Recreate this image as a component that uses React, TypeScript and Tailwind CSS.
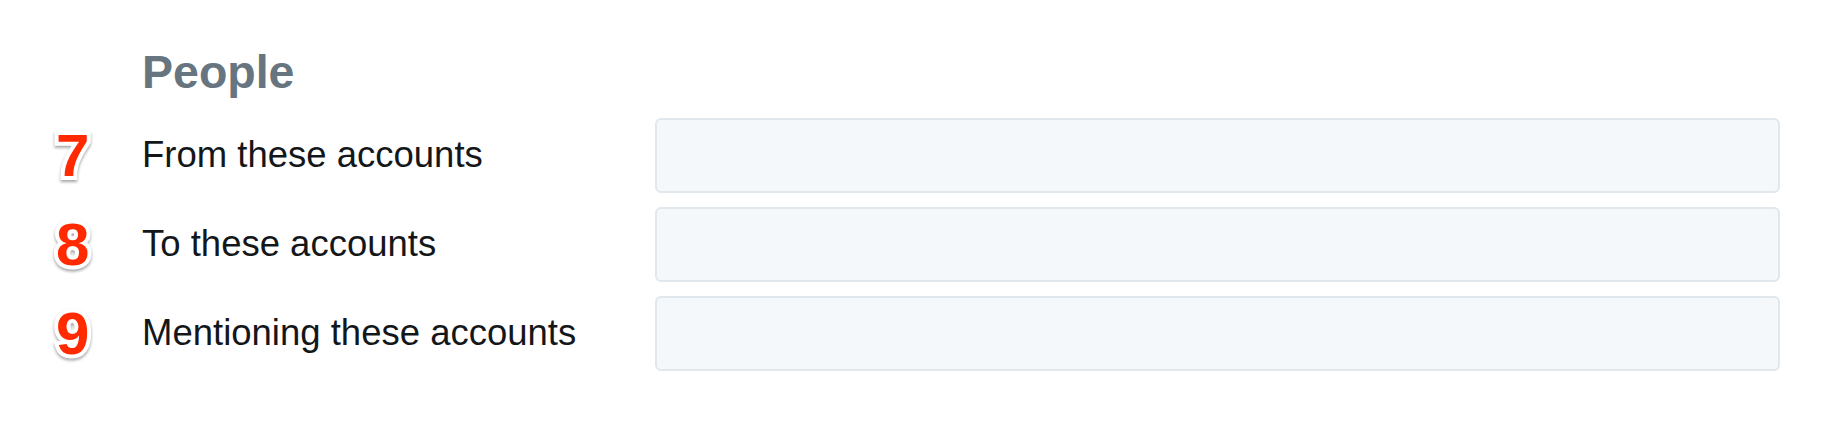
import React from "react";

const filas = [
    { numero: "7", texto: "From these accounts" },
    { numero: "8", texto: "To these accounts" },
    { numero: "9", texto: "Mentioning these accounts" },
];

function Numero({ valor }: { valor: string }) {
    return (
        <span
            className="text-[60px] leading-none font-bold text-[#ff2a00] [-webkit-text-stroke:8px_white] [paint-order:stroke_fill] drop-shadow-[0_2px_1.5px_rgba(0,0,0,0.35)]"
        >
            {valor}
        </span>
    );
}

export default function App() {
    return (
        <div className="w-full h-[422px] bg-white overflow-hidden font-['Liberation_Sans',Arial,sans-serif]">
            <div className="pl-[142px] pt-[49px]">
                <h2 className="text-[46.5px] leading-none font-bold text-[#66757f] h-[46px]">People</h2>
            </div>

            <div className="mt-[23px] flex flex-col gap-[14px]">
                {filas.map((fila) => (
                    <div className="flex flex-row items-center h-[75px]" key={fila.numero}>
                        <div className="w-[142px] shrink-0 pl-[56px]">
                            <Numero valor={fila.numero} />
                        </div>
                        <div className="w-[513px] shrink-0 text-[36.5px] text-[#14171a] leading-none">
                            {fila.texto}
                        </div>
                        <input
                            className="flex-1 h-full mr-[44px] bg-[#f5f8fa] border-2 border-[#e1e8ed] rounded-[6px] focus:outline-none"
                        />
                    </div>
                ))}
            </div>
        </div>
    );
}
